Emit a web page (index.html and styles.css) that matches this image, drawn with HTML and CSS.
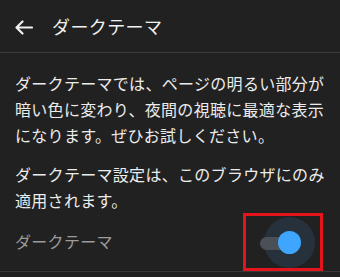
FILE: index.html
```html
<!DOCTYPE html>
<html lang="ja">
<head>
<meta charset="utf-8">
<link rel="stylesheet" href="styles.css">
</head>
<body>
<div class="page">
  <header class="header">
    <svg class="back" width="19" height="15" viewBox="0 0 19 15"><path d="M18 7.5H2.5 M8.5 1.5L2.5 7.5l6 6" fill="none" stroke="#f0f0f0" stroke-width="2.2" stroke-linecap="round" stroke-linejoin="round"/></svg>
    <h1 class="title">ダークテーマ</h1>
  </header>
  <main class="content">
    <p class="para">ダークテーマでは、ページの明るい部分が暗い色に変わり、夜間の視聴に最適な表示になります。ぜひお試しください。</p>
    <p class="para">ダークテーマ設定は、このブラウザにのみ適用されます。</p>
  </main>
  <div class="row">
    <span class="label">ダークテーマ</span>
    <div class="frame">
      <div class="switch">
        <span class="halo"></span>
        <span class="track"></span>
        <span class="knob"></span>
      </div>
    </div>
  </div>
</div>
</body>
</html>
```
FILE: styles.css
```css
html, body {
  margin: 0;
  padding: 0;
  background: #212121;
}
.page {
  width: 340px;
  height: 277px;
  overflow: hidden;
  font-family: "Noto Sans CJK JP", "Noto Sans", sans-serif;
  color: #ececec;
}
.header {
  height: 52px;
  border-bottom: 1px solid #3a3a3a;
  display: flex;
  align-items: center;
  padding-left: 14px;
  box-sizing: content-box;
}
.back {
  display: block;
  margin-top: 2px;
}
.title {
  margin: 0 0 0 19px;
  font-size: 18px;
  font-weight: 400;
  line-height: 24px;
  letter-spacing: 0.4px;
  color: #f0f0f0;
}
.content {
  padding: 17px 15px 0 15px;
}
.para {
  margin: 0 0 13px 0;
  font-size: 16px;
  line-height: 26px;
  letter-spacing: 0.3px;
}
.para:last-child {
  margin-bottom: 0;
}
.row {
  height: 58px;
  margin-top: 0;
  padding: 0 17px 0 15px;
  display: flex;
  align-items: center;
  justify-content: space-between;
  border-bottom: 1px solid #383838;
}
.label {
  font-size: 16px;
  color: #9b9b9b;
  letter-spacing: 0.3px;
  line-height: 20px;
  margin-top: -2px;
}
.frame {
  width: 80px;
  height: 58px;
  box-sizing: border-box;
  border: 3px solid #e3141c;
  display: flex;
  align-items: center;
  padding-left: 14px;
}
.switch {
  position: relative;
  width: 36px;
  height: 13px;
  margin-top: 3px;
}
.track {
  position: absolute;
  left: 0;
  top: 0;
  width: 36px;
  height: 13px;
  border-radius: 7px;
  background: #4a5056;
}
.halo {
  position: absolute;
  left: 4px;
  top: -20px;
  width: 51px;
  height: 51px;
  border-radius: 50%;
  background: #27313b;
}
.knob {
  position: absolute;
  left: 18px;
  top: -6px;
  width: 23px;
  height: 23px;
  border-radius: 50%;
  background: #3ea6ff;
}
```
